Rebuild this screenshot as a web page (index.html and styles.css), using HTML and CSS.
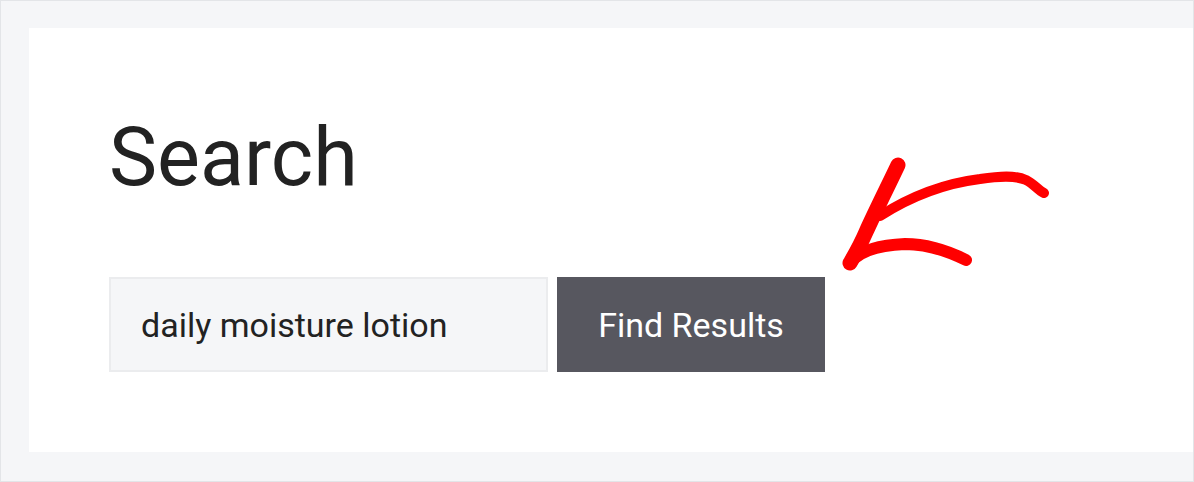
FILE: index.html
```html
<!DOCTYPE html>
<html lang="en">
<head>
<meta charset="utf-8">
<title>Search</title>
<link rel="stylesheet" href="styles.css">
</head>
<body>
<div class="frame">
  <main class="card">
    <h1 class="title">Search</h1>
    <form class="search-form" onsubmit="return false;">
      <input class="search-input" type="text" value="daily moisture lotion">
      <button class="search-button" type="submit">Find Results</button>
    </form>
    <svg class="arrow" width="240" height="130" viewBox="0 0 240 130" aria-hidden="true">
      <g fill="none" stroke="#ff0000" stroke-linecap="round" stroke-linejoin="round">
        <path d="M68,15 C60,32 45,62 36,82 C30,96 24,106 20,113" stroke-width="15"/>
        <path d="M20,113 C30,100 50,95 75,94 C100,94 120,102 136,110" stroke-width="12"/>
        <path d="M50,66 C75,50 110,34 150,29 C170,26 185,25 196,30 C204,34 208,40 214,43" stroke-width="10"/>
      </g>
    </svg>
  </main>
</div>
</body>
</html>
```
FILE: styles.css
```css
html, body {
  margin: 0;
  padding: 0;
}
body {
  width: 1194px;
  height: 482px;
  overflow: hidden;
  font-family: Roboto, "Liberation Sans", Arial, sans-serif;
}
.frame {
  box-sizing: border-box;
  width: 1194px;
  height: 482px;
  background: #f5f6f8;
  border: 1px solid #e3e5e8;
  padding: 27px 0 29px 28px;
  display: flex;
}
.card {
  position: relative;
  flex: 1;
  background: #ffffff;
  padding: 0 0 0 80px;
  display: flex;
  flex-direction: column;
}
.title {
  margin: 82px 0 0 0;
  font-size: 81px;
  line-height: 95px;
  font-weight: 400;
  color: #222222;
}
.search-form {
  margin-top: 72px;
  display: flex;
  gap: 9px;
}
.search-input {
  box-sizing: border-box;
  width: 439px;
  height: 95px;
  margin: 0;
  padding: 0 0 0 30px;
  border: 2px solid #ebecee;
  background: #f5f6f8;
  font-family: Roboto, "Liberation Sans", Arial, sans-serif;
  font-size: 34px;
  color: #222222;
  outline: none;
}
.search-button {
  box-sizing: border-box;
  width: 268px;
  height: 95px;
  margin: 0;
  padding: 0;
  border: none;
  background: #57575f;
  color: #ffffff;
  font-family: Roboto, "Liberation Sans", Arial, sans-serif;
  font-size: 34px;
}
.arrow {
  position: absolute;
  left: 801px;
  top: 122px;
}
```
